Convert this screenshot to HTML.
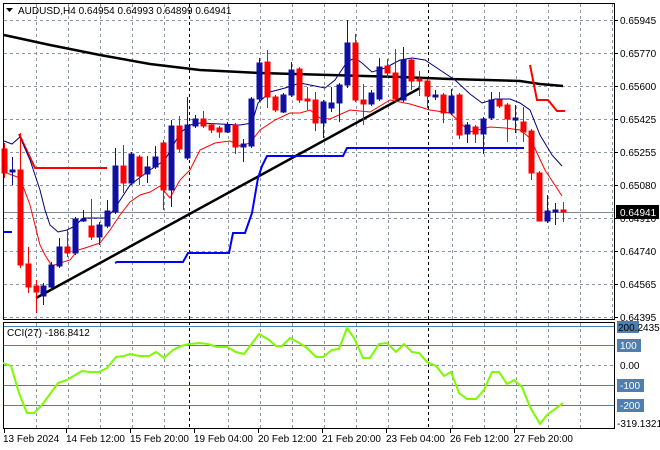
<!DOCTYPE html>
<html><head><meta charset="utf-8"><style>
html,body{margin:0;padding:0;background:#fff;width:660px;height:450px;overflow:hidden}
svg{display:block}
text{font-family:"Liberation Sans",sans-serif;font-size:10px;fill:#000}
</style></head><body>
<svg width="660" height="450" viewBox="0 0 660 450" xmlns="http://www.w3.org/2000/svg">
<rect width="660" height="450" fill="#fff"/>
<g stroke="#8a96a3" stroke-width="1" stroke-dasharray="3,3" fill="none">
<path d="M4 20.5H614M4 53.5H614M4 86.5H614M4 119.5H614M4 152.5H614M4 185.5H614M4 218.5H614M4 251.5H614M4 284.5H614M4 317.5H614"/>
<path d="M36.5 4V320M68.5 4V320M100.5 4V320M132.5 4V320M164.5 4V320M228.5 4V320M260.5 4V320M292.5 4V320M324.5 4V320M356.5 4V320M388.5 4V320M452.5 4V320M484.5 4V320M516.5 4V320M548.5 4V320M580.5 4V320M612.5 4V320"/>
<path d="M36.5 323V428M68.5 323V428M100.5 323V428M132.5 323V428M164.5 323V428M228.5 323V428M260.5 323V428M292.5 323V428M324.5 323V428M356.5 323V428M388.5 323V428M452.5 323V428M484.5 323V428M516.5 323V428M548.5 323V428M580.5 323V428"/>
<path d="M4 365.5H614"/>
</g>
<g stroke="#000" stroke-dasharray="3,3"><path d="M189.5 4V428M428.5 4V428"/></g>
<line x1="4" y1="212.5" x2="614" y2="212.5" stroke="#7a8a9a"/>
<!-- MA200 -->
<polyline fill="none" stroke="#000" stroke-width="2.5" points="4,35 50,45 100,55 150,64 200,70 260,73 330,75 400,77 450,79 520,81 540,84 563,86"/>
<!-- trendline -->
<line x1="36" y1="298" x2="420" y2="88" stroke="#000" stroke-width="2.5"/>
<!-- blue step -->
<polyline fill="none" stroke="#0000ff" stroke-width="2" points="4,232 12,232"/>
<polyline fill="none" stroke="#0000ff" stroke-width="2" points="115,263 117,262 183,262 188,253 229,253 233,233 245,233 252,213 258,178 262,166 267,156 343,156 347,148 524,148"/>
<!-- red step -->
<polyline fill="none" stroke="#ff0000" stroke-width="2" points="19,134 35,168 107,168"/>
<polyline fill="none" stroke="#ff0000" stroke-width="2" points="530,65 537,100 548,100 557,111 565,111"/>
<!-- navy band -->
<polyline fill="none" stroke="#000080" stroke-width="1" points="4,141 12,144 20,137 30,160 40,190 45,210 50,225 58,232 67,230 75,226 83,218 100,218 107,218 115,208 130,185 150,170 165,160 180,133 190,125 200,123 240,125 252,123 258,103 270,92 285,88 300,83 315,86 325,88 335,80 347,62 355,58 362,63 372,72 385,68 400,60 412,58 425,60 440,70 455,80 470,94 482,103 495,99 510,99 520,103 530,110 540,135 552,155 562,166"/>
<!-- red MA -->
<polyline fill="none" stroke="#ff0000" stroke-width="1" points="4,172 12,175 20,178 30,205 40,245 45,255 52,266 60,263 70,260 78,250 85,248 100,243 110,230 120,215 130,202 140,195 150,192 160,186 170,198 180,180 190,170 200,150 215,143 230,141 240,146 250,143 260,130 275,120 290,113 300,113 310,110 320,118 330,119 350,110 370,112 390,100 410,104 430,110 450,113 470,132 490,127 505,128 520,130 530,138 545,170 562,196"/>
<!-- candles -->
<g id="c"></g>
<g stroke-width="1">
<g stroke="#ff0000" fill="#ff0000">
<line x1="4.5" y1="143" x2="4.5" y2="178"/><rect x="2" y="149" width="5" height="24"/>
<line x1="20.5" y1="133" x2="20.5" y2="268"/><rect x="18" y="170" width="5" height="95"/>
<line x1="28.5" y1="247" x2="28.5" y2="293"/><rect x="26" y="264" width="5" height="23"/>
<line x1="36.5" y1="280" x2="36.5" y2="313"/><rect x="34" y="286" width="5" height="6"/>
<line x1="67.5" y1="230" x2="67.5" y2="257"/><rect x="65" y="247" width="5" height="6"/>
<line x1="91.5" y1="199" x2="91.5" y2="240"/><rect x="89" y="226" width="5" height="11"/>
<line x1="123.5" y1="145" x2="123.5" y2="193"/><rect x="121" y="166" width="5" height="17"/>
<line x1="139.5" y1="155" x2="139.5" y2="185"/><rect x="137" y="157" width="5" height="19"/>
<line x1="163.5" y1="140" x2="163.5" y2="210"/><rect x="161" y="143" width="5" height="47"/>
<line x1="179.5" y1="116" x2="179.5" y2="152"/><rect x="177" y="126" width="5" height="23"/>
<line x1="203.5" y1="111" x2="203.5" y2="128"/><rect x="201" y="119" width="5" height="7"/>
<line x1="211.5" y1="123" x2="211.5" y2="133"/><rect x="209" y="125" width="5" height="5"/>
<line x1="219.5" y1="126" x2="219.5" y2="138"/><rect x="217" y="128" width="5" height="4"/>
<line x1="235.5" y1="123" x2="235.5" y2="154"/><rect x="233" y="125" width="5" height="22"/>
<line x1="267.5" y1="50" x2="267.5" y2="108"/><rect x="265" y="62" width="5" height="35"/>
<line x1="275.5" y1="95" x2="275.5" y2="112"/><rect x="273" y="97" width="5" height="13"/>
<line x1="299.5" y1="67" x2="299.5" y2="103"/><rect x="297" y="69" width="5" height="31"/>
<line x1="307.5" y1="87" x2="307.5" y2="110"/><rect x="305" y="99" width="5" height="2"/>
<line x1="315.5" y1="92" x2="315.5" y2="131"/><rect x="313" y="100" width="5" height="23"/>
<line x1="355.5" y1="34" x2="355.5" y2="102"/><rect x="353" y="43" width="5" height="57"/>
<line x1="363.5" y1="84" x2="363.5" y2="125"/><rect x="361" y="100" width="5" height="4"/>
<line x1="387.5" y1="59" x2="387.5" y2="78"/><rect x="385" y="66" width="5" height="7"/>
<line x1="395.5" y1="49" x2="395.5" y2="102"/><rect x="393" y="73" width="5" height="26"/>
<line x1="411.5" y1="58" x2="411.5" y2="90"/><rect x="409" y="60" width="5" height="21"/>
<line x1="419.5" y1="71" x2="419.5" y2="96"/><rect x="417" y="79" width="5" height="2"/>
<line x1="427.5" y1="79" x2="427.5" y2="108"/><rect x="425" y="81" width="5" height="15"/>
<line x1="443.5" y1="93" x2="443.5" y2="123"/><rect x="441" y="95" width="5" height="18"/>
<line x1="459.5" y1="93" x2="459.5" y2="139"/><rect x="457" y="95" width="5" height="40"/>
<line x1="475.5" y1="125" x2="475.5" y2="143"/><rect x="473" y="127" width="5" height="7"/>
<line x1="499.5" y1="92" x2="499.5" y2="108"/><rect x="497" y="100" width="5" height="6"/>
<line x1="507.5" y1="103" x2="507.5" y2="142"/><rect x="505" y="105" width="5" height="14"/>
<line x1="523.5" y1="107" x2="523.5" y2="142"/><rect x="521" y="122" width="5" height="10"/>
<line x1="531.5" y1="129" x2="531.5" y2="180"/><rect x="529" y="131" width="5" height="42"/>
<line x1="539.5" y1="171" x2="539.5" y2="221"/><rect x="537" y="173" width="5" height="48"/>
<line x1="563.5" y1="202" x2="563.5" y2="222"/><rect x="561" y="210" width="5" height="2"/>
</g>
<g stroke="#1010a0" fill="#1010a0">
<line x1="12.5" y1="157" x2="12.5" y2="185"/><rect x="10" y="170" width="5" height="2"/>
<line x1="43.5" y1="283" x2="43.5" y2="305"/><rect x="41" y="286" width="5" height="10"/>
<line x1="51.5" y1="262" x2="51.5" y2="290"/><rect x="49" y="265" width="5" height="22"/>
<line x1="59.5" y1="238" x2="59.5" y2="268"/><rect x="57" y="247" width="5" height="19"/>
<line x1="75.5" y1="217" x2="75.5" y2="255"/><rect x="73" y="219" width="5" height="34"/>
<line x1="83.5" y1="210" x2="83.5" y2="222"/><rect x="81" y="219" width="5" height="2"/>
<line x1="99.5" y1="222" x2="99.5" y2="245"/><rect x="97" y="225" width="5" height="12"/>
<line x1="107.5" y1="200" x2="107.5" y2="228"/><rect x="105" y="211" width="5" height="15"/>
<line x1="115.5" y1="148" x2="115.5" y2="214"/><rect x="113" y="166" width="5" height="46"/>
<line x1="131.5" y1="152" x2="131.5" y2="185"/><rect x="129" y="154" width="5" height="29"/>
<line x1="147.5" y1="156" x2="147.5" y2="183"/><rect x="145" y="167" width="5" height="7"/>
<line x1="155.5" y1="146" x2="155.5" y2="169"/><rect x="153" y="157" width="5" height="10"/>
<line x1="171.5" y1="120" x2="171.5" y2="207"/><rect x="169" y="126" width="5" height="64"/>
<line x1="187.5" y1="97" x2="187.5" y2="160"/><rect x="185" y="125" width="5" height="33"/>
<line x1="195.5" y1="115" x2="195.5" y2="128"/><rect x="193" y="119" width="5" height="7"/>
<line x1="227.5" y1="122" x2="227.5" y2="133"/><rect x="225" y="125" width="5" height="7"/>
<line x1="243.5" y1="139" x2="243.5" y2="162"/><rect x="241" y="144" width="5" height="3"/>
<line x1="251.5" y1="97" x2="251.5" y2="148"/><rect x="249" y="99" width="5" height="47"/>
<line x1="259.5" y1="58" x2="259.5" y2="101"/><rect x="257" y="63" width="5" height="36"/>
<line x1="283.5" y1="93" x2="283.5" y2="113"/><rect x="281" y="95" width="5" height="17"/>
<line x1="291.5" y1="62" x2="291.5" y2="97"/><rect x="289" y="70" width="5" height="25"/>
<line x1="323.5" y1="100" x2="323.5" y2="138"/><rect x="321" y="102" width="5" height="21"/>
<line x1="331.5" y1="87" x2="331.5" y2="112"/><rect x="329" y="103" width="5" height="5"/>
<line x1="339.5" y1="83" x2="339.5" y2="122"/><rect x="337" y="85" width="5" height="18"/>
<line x1="347.5" y1="20" x2="347.5" y2="88"/><rect x="345" y="43" width="5" height="42"/>
<line x1="371.5" y1="90" x2="371.5" y2="106"/><rect x="369" y="93" width="5" height="11"/>
<line x1="379.5" y1="58" x2="379.5" y2="101"/><rect x="377" y="67" width="5" height="32"/>
<line x1="403.5" y1="47" x2="403.5" y2="102"/><rect x="401" y="60" width="5" height="40"/>
<line x1="435.5" y1="90" x2="435.5" y2="100"/><rect x="433" y="95" width="5" height="2"/>
<line x1="451.5" y1="89" x2="451.5" y2="115"/><rect x="449" y="96" width="5" height="17"/>
<line x1="467.5" y1="122" x2="467.5" y2="143"/><rect x="465" y="125" width="5" height="9"/>
<line x1="483.5" y1="117" x2="483.5" y2="154"/><rect x="481" y="119" width="5" height="15"/>
<line x1="491.5" y1="92" x2="491.5" y2="120"/><rect x="489" y="100" width="5" height="18"/>
<line x1="515.5" y1="105" x2="515.5" y2="133"/><rect x="513" y="118" width="5" height="2"/>
<line x1="547.5" y1="195" x2="547.5" y2="223"/><rect x="545" y="211" width="5" height="10"/>
<line x1="555.5" y1="203" x2="555.5" y2="225"/><rect x="553" y="210" width="5" height="2"/>
</g>
</g>
<!-- frames -->
<rect x="3.5" y="3.5" width="611" height="316" fill="none" stroke="#000"/>
<rect x="3.5" y="322.5" width="611" height="106" fill="none" stroke="#000"/>
<g stroke="#000"><path d="M614 20.5h4M614 53.5h4M614 86.5h4M614 119.5h4M614 152.5h4M614 185.5h4M614 218.5h4M614 251.5h4M614 284.5h4M614 317.5h4"/>
<path d="M4.5 429v4M66.5 429v4M130.5 429v4M194.5 429v4M258.5 429v4M322.5 429v4M386.5 429v4M450.5 429v4M514.5 429v4"/></g>
<!-- title -->
<path d="M6 8h7l-3.5 4z" fill="#000"/>
<text x="18" y="14">AUDUSD,H4  0.64954 0.64993 0.64899 0.64941</text>
<!-- price labels -->
<g>
<text x="620" y="24">0.65945</text>
<text x="620" y="57">0.65770</text>
<text x="620" y="90">0.65600</text>
<text x="620" y="123">0.65425</text>
<text x="620" y="156">0.65255</text>
<text x="620" y="189">0.65080</text>
<text x="620" y="222">0.64910</text>
<text x="620" y="255">0.64740</text>
<text x="620" y="288">0.64565</text>
<text x="620" y="321">0.64395</text>
</g>
<rect x="616" y="205" width="43" height="14" fill="#000"/>
<text x="620" y="216" style="fill:#fff">0.64941</text>
<!-- CCI -->
<g stroke="#4682b4" stroke-width="1"><path d="M4 326.5H614M4 345.5H614M4 385.5H614M4 405.5H614"/></g>
<polyline fill="none" stroke="#7cfc00" stroke-width="2" points="3,363 11,366 19,393 27,413 34,413 42,405 58,383 67,380 82,371 90,372 99,372 107,368 116,357 124,356 130,354 139,356 149,356 156,352 164,358 173,350 181,346 189,344 200,343 208,344 217,347 227,347 236,352 244,354 259,334 269,340 276,346 282,346 290,338 301,344 307,348 316,357 323,357 332,350 339,349 347,328 354,338 363,358 370,358 379,344 387,343 396,352 404,344 412,352 419,353 427,362 436,366 444,376 451,372 459,393 467,399 476,399 484,390 492,372 499,372 507,384 514,380 522,387 530,407 540,424 547,415 563,403"/>
<text x="7" y="336">CCI(27) -186.8412</text>
<rect x="617" y="321" width="22" height="12" fill="#4f7fae"/>
<text x="618" y="331">200.2435</text>
<rect x="617" y="339" width="24" height="13" fill="#4f7fae"/>
<text x="620" y="349" style="fill:#fff">100</text>
<text x="620" y="369">0.00</text>
<rect x="617" y="379" width="27" height="13" fill="#4f7fae"/>
<text x="620" y="389" style="fill:#fff">-100</text>
<rect x="617" y="399" width="27" height="13" fill="#4f7fae"/>
<text x="620" y="409" style="fill:#fff">-200</text>
<text x="617" y="427">-319.1321</text>
<!-- dates -->
<text x="3" y="442">13 Feb 2024</text>
<text x="66" y="442">14 Feb 12:00</text>
<text x="130" y="442">15 Feb 20:00</text>
<text x="194" y="442">19 Feb 04:00</text>
<text x="258" y="442">20 Feb 12:00</text>
<text x="322" y="442">21 Feb 20:00</text>
<text x="386" y="442">23 Feb 04:00</text>
<text x="450" y="442">26 Feb 12:00</text>
<text x="514" y="442">27 Feb 20:00</text>
</svg>
</body></html>
